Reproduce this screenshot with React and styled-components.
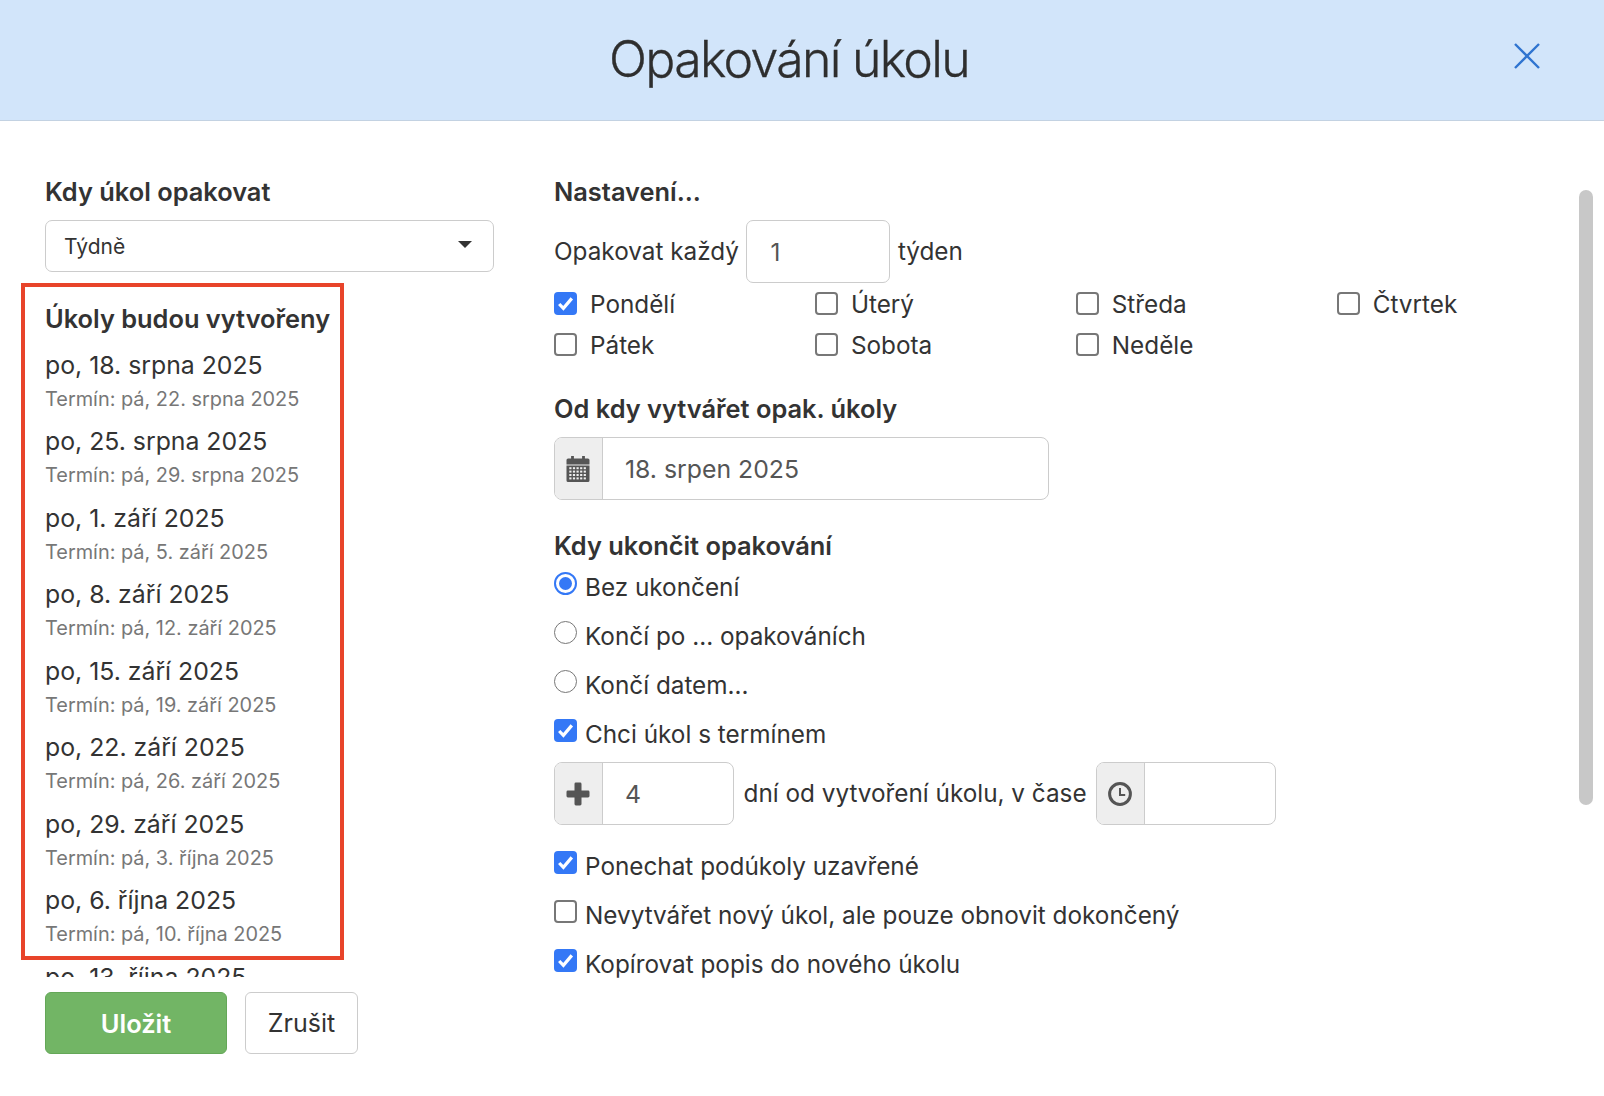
import React from "react";
import styled, { createGlobalStyle } from "styled-components";

const Global = createGlobalStyle`
  html, body { margin: 0; padding: 0; background: #fff; }
  body { font-family: Inter, "Noto Sans", "Liberation Sans", sans-serif; color: #333; }
  * { box-sizing: border-box; }
`;

const Page = styled.div`
  position: relative;
  width: 1604px;
  height: 1096px;
  overflow: hidden;
  background: #fff;
`;
const Header = styled.header`
  display: flex;
  align-items: center;
  height: 121px;
  padding: 0 64px;
  background: #d2e5fa;
  border-bottom: 1px solid #c3d2e2;
`;
const Title = styled.h1`
  flex: 1;
  margin: -2px 0 0;
  text-align: center;
  font-size: 50px;
  line-height: 60px;
  font-weight: 300;
  letter-spacing: -1.7px;
  color: #2e2e2e;
  -webkit-text-stroke: 0.3px #2e2e2e;
`;
const Close = styled.button`
  display: flex;
  width: 26px;
  height: 26px;
  margin-top: -8px;
  padding: 0;
  border: 0;
  background: none;
  color: #2f74d0;
`;
const Body = styled.main`
  display: flex;
  gap: 60px;
  padding: 55px 0 0 45px;
`;
const LeftColumn = styled.section`
  display: flex;
  flex-direction: column;
  width: 449px;
`;
const RightColumn = styled.section`
  display: flex;
  flex-direction: column;
  width: 1042px;
`;
const Heading = styled.h2`
  margin: ${(p) => p.$top || 0}px 0 ${(p) => p.$bottom || 0}px;
  font-size: 25.4px;
  line-height: 32px;
  font-weight: 600;
  color: #333;
`;
const SelectBox = styled.div`
  display: flex;
  align-items: center;
  justify-content: space-between;
  height: 52px;
  padding: 0 21px 0 18px;
  border: 1px solid #ccc;
  border-radius: 7px;
  background: #fff;
  font-size: 21px;
  color: #333;
`;
const Caret = styled.span`
  width: 0;
  height: 0;
  margin-top: -4px;
  border-left: 7px solid transparent;
  border-right: 7px solid transparent;
  border-top: 7px solid #333;
`;
const Scroller = styled.div`
  height: 705px;
  padding-top: 31px;
  overflow: hidden;
`;
const DateList = styled.div`
  margin-top: 12px;
`;
const DateItem = styled.div`
  height: 76.45px;
`;
const DateMain = styled.div`
  font-size: 24.8px;
  line-height: 37px;
  color: #333;
`;
const DateSub = styled.div`
  font-size: 19.9px;
  line-height: 30px;
  color: #777;
`;
const Actions = styled.div`
  display: flex;
  gap: 18px;
  margin-top: 15px;
`;
const SaveButton = styled.button`
  width: 182px;
  height: 62px;
  padding-bottom: 1px;
  border: 1px solid #64a758;
  border-radius: 6px;
  background: #72b565;
  color: #fff;
  font: 600 25.5px Inter, sans-serif;
`;
const CancelButton = styled.button`
  width: 113px;
  height: 62px;
  padding: 0;
  border: 1px solid #ccc;
  border-radius: 6px;
  background: #fff;
  color: #333;
  font: 400 25px Inter, sans-serif;
`;
const InlineRow = styled.div`
  display: flex;
  align-items: center;
  gap: ${(p) => p.$gap || 7.5}px;
  margin: ${(p) => p.$top || 0}px 0 0;
  font-size: 24.3px;
  line-height: 36px;
`;
const RowText = styled.span`
  padding-bottom: 2px;
`;
const TextInput = styled.input`
  width: ${(p) => p.$w}px;
  height: 63px;
  padding: 0 23px;
  border: 1px solid #ccc;
  border-radius: 7px;
  background: #fff;
  color: #555;
  font: 400 24.3px Inter, sans-serif;
  outline: none;
`;
const Group = styled.div`
  display: flex;
  width: ${(p) => p.$w}px;
  height: 63px;
  border: 1px solid #ccc;
  border-radius: 8px;
  overflow: hidden;
  background: #fff;
`;
const Addon = styled.span`
  display: flex;
  align-items: center;
  justify-content: center;
  width: 48px;
  padding-right: 2px;
  flex: none;
  background: #eee;
  border-right: 1px solid #ccc;
  color: #555;
`;
const GroupInput = styled.input`
  flex: 1;
  min-width: 0;
  padding: 0 22px;
  border: 0;
  background: transparent;
  color: #555;
  font: 400 24.8px Inter, sans-serif;
  outline: none;
`;
const DayGrid = styled.div`
  display: grid;
  grid-template-columns: repeat(4, 260.9px);
  grid-auto-rows: 41px;
`;
const Option = styled.label`
  display: flex;
  align-items: center;
  gap: ${(p) => (p.$day ? 13 : 8)}px;
  height: ${(p) => (p.$day ? 41 : 49)}px;
  font-size: 24.3px;
  color: #333;
  white-space: nowrap;
`;
const Box = styled.span`
  display: flex;
  align-items: center;
  justify-content: center;
  flex: none;
  width: 23px;
  height: 23px;
  margin-bottom: ${(p) => (p.$lift ? 7 : 0)}px;
  border-radius: 4px;
  border: ${(p) => (p.$on ? "0" : "2px solid #777")};
  background: ${(p) => (p.$on ? "#3478f6" : "#fff")};
  color: #fff;
`;
const Radio = styled.span`
  display: flex;
  align-items: center;
  justify-content: center;
  flex: none;
  width: 23px;
  height: 23px;
  margin-bottom: 7px;
  border-radius: 50%;
  border: ${(p) => (p.$on ? "2px solid #3478f6" : "1.5px solid #777")};
  background: #fff;
  &::after {
    content: "";
    display: ${(p) => (p.$on ? "block" : "none")};
    width: 13px;
    height: 13px;
    border-radius: 50%;
    background: #3478f6;
  }
`;
const Stack = styled.div`
  display: flex;
  flex-direction: column;
  margin-top: ${(p) => p.$top || 0}px;
`;
const Thumb = styled.div`
  position: absolute;
  top: 190px;
  left: 1579px;
  width: 14px;
  height: 615px;
  border-radius: 7px;
  background: #c8c8c8;
`;
const Annotation = styled.div`
  position: absolute;
  top: 283px;
  left: 21px;
  width: 323px;
  height: 677px;
  border: 4px solid #e8442a;
  pointer-events: none;
`;

const Check = () => (
  <svg width="17" height="15" viewBox="0 0 17 15" aria-hidden="true">
    <path d="M2.2 8l4.2 4.4L14.8 2.4" fill="none" stroke="currentColor" strokeWidth="3.2" />
  </svg>
);
const CheckBox = ({ on, lift }) => <Box $on={on} $lift={lift}>{on && <Check />}</Box>;

const CloseIcon = () => (
  <svg width="26" height="26" viewBox="0 0 26 26" aria-hidden="true">
    <path d="M1 1l24 24M25 1L1 25" stroke="currentColor" strokeWidth="2.4" fill="none" />
  </svg>
);
const CalendarIcon = () => {
  const cells = [];
  for (let r = 0; r < 4; r++)
    for (let c = 0; c < 5; c++)
      cells.push(<rect key={`${r}-${c}`} x={2.8 + c * 3.6} y={11.2 + r * 3.4} width="2.2" height="2" fill="#eee" />);
  return (
    <svg width="24" height="26" viewBox="0 0 23 26" aria-hidden="true">
      <path fill="currentColor" d="M4.6 0h2.8v2.4h8.2V0h2.8v2.4h3A1.6 1.6 0 0 1 23 4v4.4H0V4a1.6 1.6 0 0 1 1.6-1.6h3zM0 9.4h23v15a1.6 1.6 0 0 1-1.6 1.6H1.6A1.6 1.6 0 0 1 0 24.4z" />
      {cells}
    </svg>
  );
};
const PlusIcon = () => (
  <svg width="24" height="24" viewBox="0 0 24 24" aria-hidden="true">
    <rect x="8.5" y="0.5" width="7" height="23" rx="1.4" fill="currentColor" />
    <rect x="0.5" y="8.5" width="23" height="7" rx="1.4" fill="currentColor" />
  </svg>
);
const ClockIcon = () => (
  <svg width="24" height="24" viewBox="0 0 24 24" aria-hidden="true">
    <circle cx="12" cy="12" r="10.4" fill="none" stroke="currentColor" strokeWidth="3" />
    <path d="M12 6v7h5.2" fill="none" stroke="currentColor" strokeWidth="2" />
  </svg>
);

const dates = [
  ["po, 18. srpna 2025", "Termín: pá, 22. srpna 2025"],
  ["po, 25. srpna 2025", "Termín: pá, 29. srpna 2025"],
  ["po, 1. září 2025", "Termín: pá, 5. září 2025"],
  ["po, 8. září 2025", "Termín: pá, 12. září 2025"],
  ["po, 15. září 2025", "Termín: pá, 19. září 2025"],
  ["po, 22. září 2025", "Termín: pá, 26. září 2025"],
  ["po, 29. září 2025", "Termín: pá, 3. října 2025"],
  ["po, 6. října 2025", "Termín: pá, 10. října 2025"],
  ["po, 13. října 2025"],
];
const days = [
  ["Pondělí", true], ["Úterý"], ["Středa"], ["Čtvrtek"],
  ["Pátek"], ["Sobota"], ["Neděle"],
];

export default function App() {
  return (
    <Page>
      <Global />
      <Header>
        <Title>Opakování úkolu</Title>
        <Close aria-label="Zavřít"><CloseIcon /></Close>
      </Header>
      <Body>
        <LeftColumn>
          <Heading $bottom={12}>Kdy úkol opakovat</Heading>
          <SelectBox>Týdně<Caret /></SelectBox>
          <Scroller>
            <Heading>Úkoly budou vytvořeny</Heading>
            <DateList>
              {dates.map(([main, sub]) => (
                <DateItem key={main}>
                  <DateMain>{main}</DateMain>
                  {sub && <DateSub>{sub}</DateSub>}
                </DateItem>
              ))}
            </DateList>
          </Scroller>
          <Actions>
            <SaveButton>Uložit</SaveButton>
            <CancelButton>Zrušit</CancelButton>
          </Actions>
        </LeftColumn>
        <RightColumn>
          <Heading $bottom={12}>Nastavení...</Heading>
          <InlineRow>
            <RowText>Opakovat každý</RowText>
            <TextInput $w={144} value="1" readOnly />
            <RowText>týden</RowText>
          </InlineRow>
          <DayGrid>
            {days.map(([name, on]) => (
              <Option $day key={name}><CheckBox on={on} />{name}</Option>
            ))}
          </DayGrid>
          <Heading $top={28} $bottom={12}>Od kdy vytvářet opak. úkoly</Heading>
          <Group $w={495}>
            <Addon><CalendarIcon /></Addon>
            <GroupInput value="18. srpen 2025" readOnly />
          </Group>
          <Heading $top={30}>Kdy ukončit opakování</Heading>
          <Stack>
            <Option><Radio $on />Bez ukončení</Option>
            <Option><Radio />Končí po ... opakováních</Option>
            <Option><Radio />Končí datem...</Option>
            <Option><CheckBox on lift />Chci úkol s termínem</Option>
          </Stack>
          <InlineRow $gap={9.5} $top={4}>
            <Group $w={180}>
              <Addon><PlusIcon /></Addon>
              <GroupInput value="4" readOnly />
            </Group>
            <RowText>dní od vytvoření úkolu, v čase</RowText>
            <Group $w={180}>
              <Addon><ClockIcon /></Addon>
              <GroupInput readOnly />
            </Group>
          </InlineRow>
          <Stack $top={16}>
            <Option><CheckBox on lift />Ponechat podúkoly uzavřené</Option>
            <Option><CheckBox lift />Nevytvářet nový úkol, ale pouze obnovit dokončený</Option>
            <Option><CheckBox on lift />Kopírovat popis do nového úkolu</Option>
          </Stack>
        </RightColumn>
      </Body>
      <Thumb />
      <Annotation />
    </Page>
  );
}
